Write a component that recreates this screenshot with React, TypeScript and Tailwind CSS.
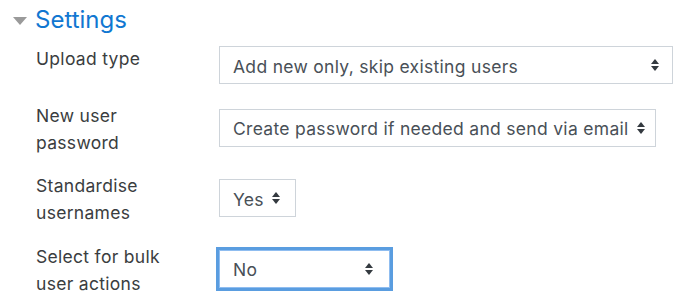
import React from 'react';

interface Row {
  label: string[];
  value: string;
  width: string;
  padRight: string;
  focused?: boolean;
}

const rows: Row[] = [
  { label: ['Upload type'], value: 'Add new only, skip existing users', width: 'w-[454px]', padRight: 'pr-[13px]' },
  { label: ['New user', 'password'], value: 'Create password if needed and send via email', width: 'w-[437px]', padRight: 'pr-[11px]' },
  { label: ['Standardise', 'usernames'], value: 'Yes', width: 'w-[77px]', padRight: 'pr-[16px]' },
  { label: ['Select for bulk', 'user actions'], value: 'No', width: 'w-[171px]', padRight: 'pr-[16px]', focused: true },
];

const SortArrows: React.FC = () => (
  <svg width="8" height="12" viewBox="0 0 8 12" className="shrink-0">
    <path d="M0 5 L4 0 L8 5 Z" fill="#343a40" />
    <path d="M0 7 L8 7 L4 12 Z" fill="#343a40" />
  </svg>
);

const SelectBox: React.FC<{ row: Row }> = ({ row }) => (
  <div
    className={`flex h-[38px] items-center justify-between gap-2 bg-white pl-[13px] text-[#495057] ${row.width} ${row.padRight} ${
      row.focused
        ? 'border border-[#8fbdf0] ring-[3px] ring-[#5a9de0]'
        : 'border border-[#ced4da]'
    }`}
  >
    <span className="translate-y-[1px] whitespace-nowrap tracking-[0.3px]">{row.value}</span>
    <SortArrows />
  </div>
);

export default function App() {
  return (
    <div
      className="min-h-screen bg-white pt-[5px] text-[17.5px] leading-[27px] text-[#3a3d40]"
      style={{ fontFamily: 'Inter, "Noto Sans", sans-serif' }}
    >
      <div className="flex items-center pl-[13px]">
        <svg width="14" height="8" viewBox="0 0 14 8" className="mr-[8px] mt-[2px]">
          <path d="M0 0 L14 0 L7 8 Z" fill="#9a9a9a" />
        </svg>
        <h3 className="text-[24px] leading-[29px] text-[#1177d1]">Settings</h3>
      </div>

      <div className="mt-[12px] flex flex-col gap-[16.5px] pl-[36px]">
        {rows.map((row, i) => (
          <div key={i} className="flex items-center">
            <label className={`w-[183px] shrink-0 tracking-[0.3px] ${i === 0 ? 'self-start -mt-[1px]' : 'translate-y-[1px]'}`}>
              {row.label.map((line) => (
                <div key={line}>{line}</div>
              ))}
            </label>
            <SelectBox row={row} />
          </div>
        ))}
      </div>
    </div>
  );
}
